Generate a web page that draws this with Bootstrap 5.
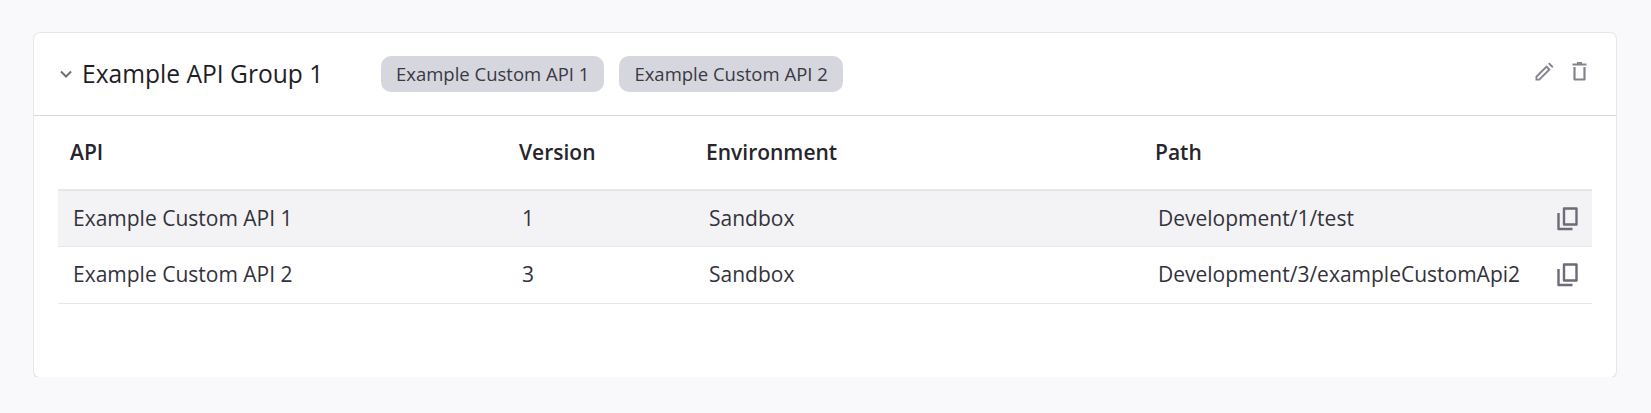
<!DOCTYPE html>
<html lang="en">
<head>
    <meta charset="UTF-8">
    <title>API Groups</title>
    <meta name="viewport" content="width=device-width, initial-scale=1">
    <link href="https://cdn.jsdelivr.net/npm/bootstrap@5.3.0/dist/css/bootstrap.min.css" rel="stylesheet">
    <style>
        body { background: #f9f9fc; font-family: "Open Sans", "Liberation Sans", sans-serif; color: #2b2a33; }
        .page-wrap { padding: 33px 35px 0 34px; }
        .group-card { height: 344px; border: 0; border-radius: 6px; background: #fff; box-shadow: 0 0 0 1px #e6e6ec, 0 2px 1px 0 rgba(40, 40, 60, .2); }
        .group-head { height: 83px; padding: 0 29px 0 24px; border-bottom: 1px solid #d9d9e0; }
        .chevron-btn { width: 16px; height: 16px; margin-right: 8px; color: #6f6e7a; }
        .group-title { width: 295px; margin: 0; font-size: 24.6px; font-weight: 500; color: #1f1e26; }
        .chip-row { gap: 15px; }
        .api-chip { height: 36px; padding: 0 15px; border-radius: 10px; background: #d6d6df; color: #3a3944; font-size: 18.5px; font-weight: 500; line-height: 36px; }
        .head-actions { margin-top: -6px; gap: 18px; color: #85848e; }
        .group-body { padding: 0 24px 0 24px; }
        .api-table { table-layout: fixed; margin: 0; font-size: 21px; color: #33323b; }
        .api-table th { height: 74px; padding: 1px 12px 0; font-size: 21px; font-weight: 600; color: #26252d; vertical-align: middle; border-bottom: 2px solid #e6e6eb; }
        .api-table td { height: 56.5px; padding: 0 15px; vertical-align: middle; border-bottom: 1.5px solid #e6e6eb; background: #fff; box-shadow: none; }
        .api-table tr.row-shaded td { background: #f3f3f6; }
        .path-cell { position: relative; }
        .copy-icon { position: absolute; right: 14px; top: 50%; transform: translateY(-50%); color: #6c6b77; }
    </style>
</head>
<body>
    <div class="page-wrap">
        <div class="card group-card">
            <div class="group-head d-flex align-items-center">
                <svg class="chevron-btn" viewBox="0 0 16 16" fill="none" stroke="currentColor" stroke-width="2"><path d="M3 5.5 8 10.5 13 5.5"/></svg>
                <h2 class="group-title">Example API Group 1</h2>
                <div class="chip-row d-flex ms-1">
                    <span class="api-chip">Example Custom API 1</span>
                    <span class="api-chip">Example Custom API 2</span>
                </div>
                <div class="head-actions d-flex align-items-center ms-auto">
                    <svg width="19" height="19" viewBox="0 0 19 19" fill="currentColor"><path fill-rule="evenodd" d="M0.500 18.500v-4.200L11.500 3.300l4.200 4.200-11 11Z M2.300 16.700h1.500L13 7.500 11.500 6 2.300 15.200Z"/><path d="M13 1.800 14.400 0.500l4.100 4.100-1.300 1.400Z"/></svg>
                    <svg width="15" height="19" viewBox="0 0 15 19" fill="none" stroke="currentColor" stroke-width="2.200"><path d="M0.500 2.500h14M5 1h5"/><path stroke-linejoin="round" d="M2.500 5v12.500h10V5"/></svg>
                </div>
            </div>
            <div class="group-body">
                <table class="table api-table">
                    <colgroup>
                        <col style="width: 449px">
                        <col style="width: 187px">
                        <col style="width: 449px">
                        <col>
                    </colgroup>
                    <thead>
                        <tr>
                            <th>API</th>
                            <th>Version</th>
                            <th>Environment</th>
                            <th>Path</th>
                        </tr>
                    </thead>
                    <tbody>
                        <tr class="row-shaded">
                            <td>Example Custom API 1</td>
                            <td>1</td>
                            <td>Sandbox</td>
                            <td class="path-cell">Development/1/test
                                <svg class="copy-icon" width="21" height="24" viewBox="0 0 21 24" fill="none" stroke="currentColor" stroke-width="2.400"><path stroke-linejoin="round" d="M7 1.500h12.500v16H7Z"/><path stroke-linejoin="round" d="M1.500 6v16h14"/></svg>
                            </td>
                        </tr>
                        <tr>
                            <td>Example Custom API 2</td>
                            <td>3</td>
                            <td>Sandbox</td>
                            <td class="path-cell">Development/3/exampleCustomApi2
                                <svg class="copy-icon" width="21" height="24" viewBox="0 0 21 24" fill="none" stroke="currentColor" stroke-width="2.400"><path stroke-linejoin="round" d="M7 1.500h12.500v16H7Z"/><path stroke-linejoin="round" d="M1.500 6v16h14"/></svg>
                            </td>
                        </tr>
                    </tbody>
                </table>
            </div>
        </div>
    </div>
    <script src="https://cdn.jsdelivr.net/npm/bootstrap@5.3.0/dist/js/bootstrap.bundle.min.js"></script>
</body>
</html>
